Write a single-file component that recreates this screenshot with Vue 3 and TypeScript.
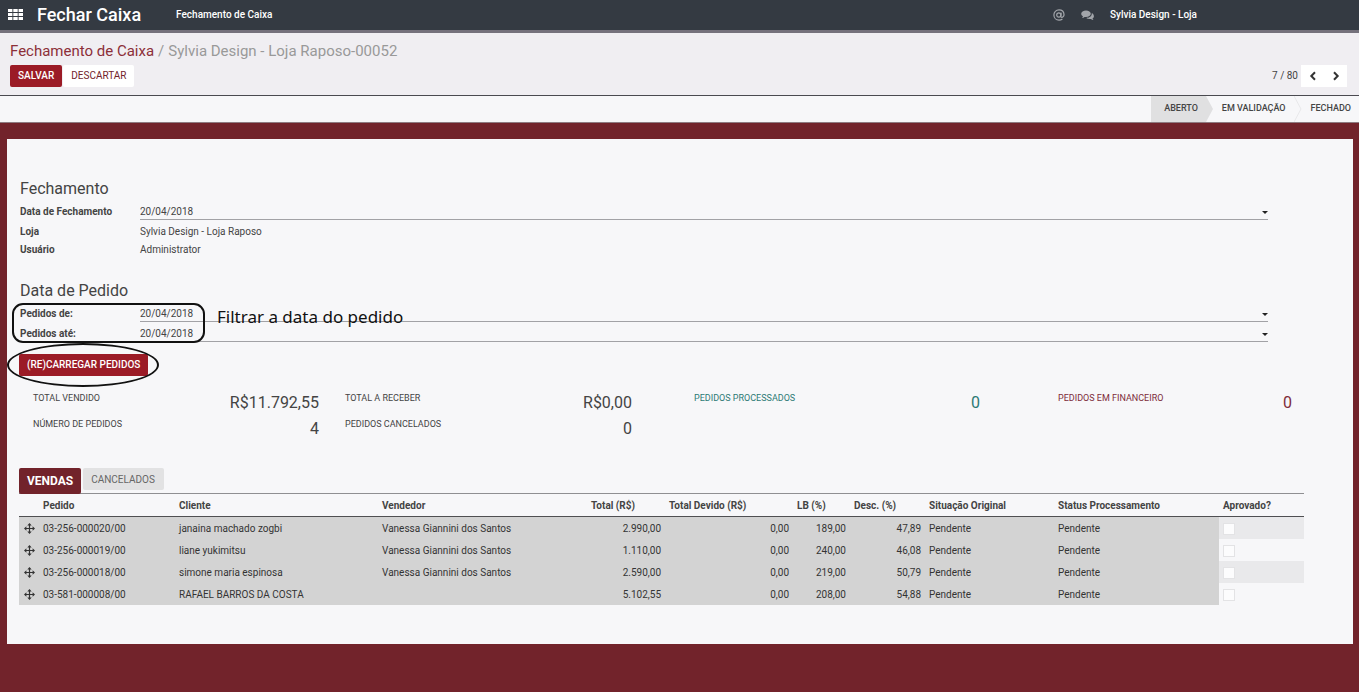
<script setup lang="ts">
import { ref } from 'vue'

interface Order {
  code: string
  client: string
  seller: string
  total: string
  due: string
  lb: string
  discount: string
  approved: boolean
}

const closingDate = ref('20/04/2018')
const ordersFrom = ref('20/04/2018')
const ordersTo = ref('20/04/2018')

const vanessa = 'Vanessa Giannini dos Santos'
const orders = ref<Order[]>([
  { code: '03-256-000020/00', client: 'janaina machado zogbi', seller: vanessa, total: '2.990,00', due: '0,00', lb: '189,00', discount: '47,89', approved: false },
  { code: '03-256-000019/00', client: 'liane yukimitsu', seller: vanessa, total: '1.110,00', due: '0,00', lb: '240,00', discount: '46,08', approved: false },
  { code: '03-256-000018/00', client: 'simone maria espinosa', seller: vanessa, total: '2.590,00', due: '0,00', lb: '219,00', discount: '50,79', approved: false },
  { code: '03-581-000008/00', client: 'RAFAEL BARROS DA COSTA', seller: '', total: '5.102,55', due: '0,00', lb: '208,00', discount: '54,88', approved: false },
])

const stats = [
  { tone: '', rows: [['TOTAL VENDIDO', 'R$11.792,55'], ['NÚMERO DE PEDIDOS', '4']] },
  { tone: '', rows: [['TOTAL A RECEBER', 'R$0,00'], ['PEDIDOS CANCELADOS', '0']] },
  { tone: 'teal', rows: [['PEDIDOS PROCESSADOS', '0']] },
  { tone: 'wine', rows: [['PEDIDOS EM FINANCEIRO', '0']] },
]
</script>

<template>
  <div class="app">
    <header class="topbar">
      <button class="apps" aria-label="Aplicativos">
        <svg width="15" height="11" viewBox="0 0 15 11" fill="#fff">
          <path d="M0 0h4.400v3H0zM5.300 0h4.400v3H5.300zM10.600 0H15v3h-4.400zM0 4h4.400v3H0zM5.300 4h4.400v3H5.300zM10.600 4H15v3h-4.400zM0 8h4.400v3H0zM5.300 8h4.400v3H5.300zM10.600 8H15v3h-4.400z" />
        </svg>
      </button>
      <span class="brand">Fechar Caixa</span>
      <a class="menu" href="#">Fechamento de Caixa</a>
      <div class="systray">
        <button aria-label="Menções">
          <svg width="12" height="12" viewBox="0 0 12 12" fill="none" stroke="#a2a5aa" stroke-width="1.200">
            <circle cx="5.800" cy="6" r="2.100" />
            <path d="M8.200 3.600 7.800 7c-.1 1 .5 1.500 1.300 1.300 1.300-.3 2-1.500 1.900-2.900C10.800 2.700 8.700.9 6 .9 3.100.9.900 3.100.9 6s2.200 5.100 5.100 5.100c1.400 0 2.500-.4 3.400-1.100" />
          </svg>
        </button>
        <button aria-label="Conversas">
          <svg width="13" height="11" viewBox="0 0 13 11" fill="#a2a5aa">
            <path d="M5 .5C2.300.500.200 1.900.2 3.800c0 1.100.7 2 1.800 2.600-.2.600-.6 1-1 1.500 1 0 1.900-.4 2.600-1 .5.100.9.200 1.400.2 2.700 0 4.800-1.500 4.800-3.300S7.700.500 5 .5z" />
            <path d="M10.700 3.100c.1.200.1.500.1.700 0 2.400-2.600 4.200-5.600 4.200.9.700 2.100 1.100 3.400 1.100.4 0 .9 0 1.300-.1.700.600 1.600 1 2.600 1-.4-.5-.8-.9-1-1.500 1.100-.6 1.400-1.400 1.400-2.300 0-1.300-.9-2.500-2.200-3.100z" />
          </svg>
        </button>
        <a class="user" href="#">Sylvia Design - Loja</a>
      </div>
    </header>

    <section class="panel">
      <nav class="crumbs">
        <a href="#">Fechamento de Caixa</a>
        <span class="sep">/</span>
        <span>Sylvia Design - Loja Raposo-00052</span>
      </nav>
      <div class="actions">
        <button class="btn primary">SALVAR</button>
        <button class="btn plain">DESCARTAR</button>
        <span class="count">7 / 80</span>
        <div class="pager">
          <button aria-label="Anterior">
            <svg width="8" height="10" viewBox="0 0 8 10" fill="none" stroke="#333" stroke-width="2"><path d="M6 1.200 2.300 5 6 8.800" /></svg>
          </button>
          <button aria-label="Próximo">
            <svg width="8" height="10" viewBox="0 0 8 10" fill="none" stroke="#333" stroke-width="2"><path d="M2 1.200 5.700 5 2 8.800" /></svg>
          </button>
        </div>
      </div>
    </section>

    <div class="statusbar">
      <span class="stage current">ABERTO</span>
      <svg class="tip" width="8" height="26" viewBox="0 0 8 26"><path d="M0 0 7 13 0 26z" fill="#e0e0e1" /></svg>
      <span class="stage middle">EM VALIDAÇÃO</span>
      <svg class="tip" width="8" height="26" viewBox="0 0 8 26"><path d="M0 0 7 13 0 26" fill="none" stroke="#e8e8ea" /></svg>
      <span class="stage last">FECHADO</span>
    </div>

    <main class="sheet">
      <section class="group">
        <h2>Fechamento</h2>
        <div class="field editable">
          <label for="closing">Data de Fechamento</label>
          <div class="entry">
            <input id="closing" v-model="closingDate" type="text" />
            <svg width="6" height="3" viewBox="0 0 6 3"><path d="M0 0h6L3 3z" fill="#222" /></svg>
          </div>
        </div>
        <div class="field"><span class="label">Loja</span><span>Sylvia Design - Loja Raposo</span></div>
        <div class="field"><span class="label">Usuário</span><span>Administrator</span></div>
      </section>

      <section class="group orders-range">
        <h2>Data de Pedido</h2>
        <div class="marked">
          <div class="field editable">
            <label for="from">Pedidos de:</label>
            <div class="entry">
              <input id="from" v-model="ordersFrom" type="text" />
              <svg width="6" height="3" viewBox="0 0 6 3"><path d="M0 0h6L3 3z" fill="#222" /></svg>
            </div>
          </div>
          <div class="field editable">
            <label for="to">Pedidos até:</label>
            <div class="entry">
              <input id="to" v-model="ordersTo" type="text" />
              <svg width="6" height="3" viewBox="0 0 6 3"><path d="M0 0h6L3 3z" fill="#222" /></svg>
            </div>
          </div>
          <div class="frame"></div>
          <span class="note">Filtrar a data do pedido</span>
        </div>
      </section>

      <div class="reload">
        <button class="btn primary">(RE)CARREGAR PEDIDOS</button>
        <div class="ring"></div>
      </div>

      <section class="stats">
        <dl v-for="(stat, i) in stats" :key="i" :class="stat.tone">
          <div v-for="row in stat.rows" :key="row[0]">
            <dt>{{ row[0] }}</dt>
            <dd>{{ row[1] }}</dd>
          </div>
        </dl>
      </section>

      <div class="tabs" role="tablist">
        <button class="tab active" role="tab" aria-selected="true">VENDAS</button>
        <button class="tab" role="tab" aria-selected="false">CANCELADOS</button>
      </div>

      <table>
        <colgroup>
          <col class="c-move" /><col class="c-code" /><col class="c-client" /><col class="c-seller" />
          <col class="c-total" /><col class="c-due" /><col class="c-lb" /><col class="c-disc" />
          <col class="c-orig" /><col class="c-proc" /><col class="c-ok" />
        </colgroup>
        <thead>
          <tr>
            <th></th>
            <th>Pedido</th>
            <th>Cliente</th>
            <th>Vendedor</th>
            <th>Total (R$)</th>
            <th>Total Devido (R$)</th>
            <th>LB (%)</th>
            <th>Desc. (%)</th>
            <th>Situação Original</th>
            <th>Status Processamento</th>
            <th>Aprovado?</th>
          </tr>
        </thead>
        <tbody>
          <tr v-for="order in orders" :key="order.code">
            <td class="move">
              <svg width="11" height="11" viewBox="0 0 11 11" fill="#333">
                <path d="M5.500 0 7.700 2.400H6.100v2.500h2.500V3.300L11 5.500 8.600 7.700V6.100H6.100v2.500h1.600L5.500 11 3.300 8.600h1.600V6.100H2.400v1.600L0 5.500l2.400-2.200v1.600h2.500V2.400H3.300z" />
              </svg>
            </td>
            <td>{{ order.code }}</td>
            <td>{{ order.client }}</td>
            <td>{{ order.seller }}</td>
            <td class="num">{{ order.total }}</td>
            <td class="num">{{ order.due }}</td>
            <td class="num">{{ order.lb }}</td>
            <td class="num">{{ order.discount }}</td>
            <td>Pendente</td>
            <td>Pendente</td>
            <td class="ok"><input v-model="order.approved" type="checkbox" :aria-label="'Aprovado ' + order.code" /></td>
          </tr>
        </tbody>
      </table>
    </main>
  </div>
</template>

<style>
body {
  background: #72232b;
}
</style>

<style scoped>
.app {
  font-family: Roboto, "Liberation Sans", sans-serif;
  font-size: 10px;
  line-height: 18px;
  color: #444;
  min-height: 100vh;
  background: #72232b;
}
.app * {
  box-sizing: border-box;
}
button,
input {
  font: inherit;
  color: inherit;
  border: 0;
  padding: 0;
  margin: 0;
  background: none;
}
button {
  cursor: pointer;
}
a {
  text-decoration: none;
}
svg {
  display: block;
  flex: none;
}

.topbar {
  display: flex;
  align-items: center;
  height: 33px;
  padding: 0 162px 0 8px;
  background: #343a42;
  border-bottom: 3px solid #75717c;
  color: #fff;
}
.apps {
  margin: 0 14px 2px 0;
}
.brand {
  font-size: 18px;
  font-weight: 500;
  margin-right: 35px;
}
.menu,
.user {
  color: #fff;
  font-weight: 500;
}
.systray {
  display: flex;
  align-items: center;
  gap: 16px;
  margin-left: auto;
}

.panel {
  padding: 8px 12px 8px 10px;
  background: #f0eef2;
  border-bottom: 1px solid #4a4a50;
}
.crumbs {
  display: flex;
  gap: 4px;
  font-size: 15px;
  line-height: 20px;
  color: #999;
}
.crumbs a {
  color: #8c2f39;
}
.actions {
  display: flex;
  align-items: center;
  margin-top: 4px;
}
.btn {
  height: 22px;
  padding: 0 8px;
  line-height: 22px;
  border-radius: 2px;
  white-space: nowrap;
}
.primary {
  background: #9b1b26;
  color: #fff;
  font-weight: 500;
}
.plain {
  margin-left: 1px;
  background: #fff;
  color: #72232b;
}
.count {
  margin-left: auto;
}
.pager {
  display: flex;
  margin-left: 3px;
  background: #fff;
}
.pager button {
  display: flex;
  align-items: center;
  justify-content: center;
  width: 22px;
  height: 22px;
}
.pager button:first-child {
  width: 24px;
}

.statusbar {
  display: flex;
  justify-content: flex-end;
  height: 27px;
  background: #f7f7f9;
  border-bottom: 1px solid #8e7b80;
  font-size: 9px;
  font-weight: 500;
  line-height: 24px;
}
.stage.current {
  padding: 0 8px 0 13px;
  background: #e0e0e1;
}
.stage.middle {
  padding: 0 8px;
}
.stage.last {
  padding: 0 8px 0 9px;
}

.sheet {
  margin: 16px 6px 0 7px;
  padding: 38px 49px 39px 12px;
  background: #f7f7f9;
}
.group {
  margin-right: 36px;
  padding-left: 1px;
}
h2 {
  margin: 0 0 2px;
  font-size: 16px;
  font-weight: 400;
  line-height: 24px;
}
.orders-range {
  margin-top: 20px;
}
.field {
  display: flex;
}
.field label,
.field .label {
  flex: 0 0 120px;
  font-weight: 700;
}
.editable {
  margin-bottom: 3px;
}
.editable label {
  line-height: 17px;
}
.entry {
  display: flex;
  flex: 1;
  align-items: center;
  height: 17px;
  padding-top: 2px;
  border-bottom: 1px solid #a2a2a6;
}
.entry input {
  flex: 1;
  min-width: 0;
  height: 14px;
  line-height: 14px;
  outline: none;
}
.marked {
  position: relative;
}
.frame {
  position: absolute;
  left: -8px;
  top: -2px;
  width: 193px;
  height: 40px;
  border: 2px solid #111;
  border-radius: 11px;
  pointer-events: none;
}
.note {
  position: absolute;
  left: 197px;
  top: 0;
  font-family: "Noto Sans", "Open Sans", sans-serif;
  font-size: 17px;
  line-height: 24px;
  color: #111;
}
.reload {
  position: relative;
  display: flex;
  margin-top: 12px;
}
.ring {
  position: absolute;
  left: -12px;
  top: -11px;
  width: 152px;
  height: 44px;
  border: 2px solid #111;
  border-radius: 50%;
  pointer-events: none;
}

.stats {
  display: grid;
  grid-template-columns: 312fr 349fr 364fr 246fr;
  margin-top: 14px;
  padding-left: 14px;
}
.stats dl {
  margin: 0;
  padding-right: 26px;
}
.stats dl:nth-child(2) {
  padding-right: 62px;
}
.stats dl:nth-child(3) {
  padding-right: 78px;
}
.stats dl:nth-child(4) {
  padding-right: 12px;
}
.stats dl div {
  display: flex;
  justify-content: space-between;
  height: 26px;
}
.stats dt {
  font-size: 9px;
  line-height: 16px;
}
.stats dd {
  margin: 0;
  font-size: 16px;
  line-height: 26px;
}
.stats .teal {
  color: #2c7a75;
}
.stats .wine {
  color: #7d2c3a;
}

.tabs {
  display: flex;
  align-items: flex-start;
  gap: 2px;
  margin-top: 26px;
}
.tab {
  height: 22px;
  padding: 1px 9px 0 8px;
  background: #e2e2e3;
  border-radius: 2px;
  color: #666;
}
.tab.active {
  height: 26px;
  padding: 0 8px;
  background: #72232b;
  color: #fff;
  font-size: 12px;
  font-weight: 700;
}

table {
  width: 100%;
  table-layout: fixed;
  border-collapse: separate;
  border-spacing: 0;
  margin-top: -1px;
}
.c-move { width: 20px; }
.c-code { width: 136px; }
.c-client { width: 203px; }
.c-seller { width: 209px; }
.c-total { width: 78px; }
.c-due { width: 128px; }
.c-lb { width: 57px; }
.c-disc { width: 75px; }
.c-orig { width: 129px; }
.c-proc { width: 165px; }
.c-ok { width: 85px; }
th,
td {
  height: 22px;
  padding: 2px 4px 0;
  text-align: left;
  white-space: nowrap;
}
th {
  height: 24px;
  border-top: 1px solid #8f8f92;
  border-bottom: 1px solid #4f4f52;
  font-weight: 700;
}
td {
  background: #d3d3d3;
  color: #333;
}
td.move {
  padding: 0 0 0 5px;
}
td.num {
  text-align: right;
}
td.ok {
  background: #f7f7f9;
}
tr:nth-child(odd) td.ok {
  background: #e9e9eb;
}
.ok input {
  display: block;
  appearance: none;
  width: 12px;
  height: 12px;
  background: #fcfcfd;
  border: 1px solid #e3e3e5;
}
.ok input:checked {
  background: #72232b;
}
</style>
